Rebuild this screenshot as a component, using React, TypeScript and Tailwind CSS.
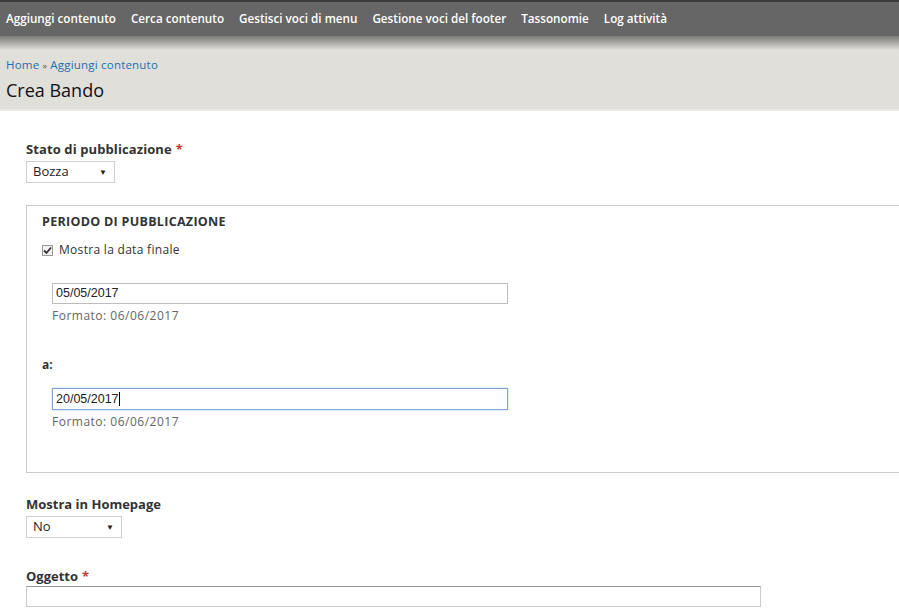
import React from "react";

const navItems = [
  "Aggiungi contenuto",
  "Cerca contenuto",
  "Gestisci voci di menu",
  "Gestione voci del footer",
  "Tassonomie",
  "Log attività",
];

function Select({ value, width }: { value: string; width: string }) {
  return (
    <div
      className={`${width} h-[22px] border border-[#cfcfcf] bg-white flex items-center justify-between pl-[6px] pr-[7px] text-[13px] text-[#222]`}
    >
      <span>{value}</span>
      <span className="text-[8px] text-[#222]">▼</span>
    </div>
  );
}

function Req() {
  return <span className="text-[#c0392b] ml-[4px]">*</span>;
}

export default function App() {
  return (
    <div
      className="w-[899px] h-[611px] overflow-hidden bg-white text-[#222]"
      style={{ fontFamily: '"Open Sans", "Noto Sans", sans-serif' }}
    >
      <nav className="h-[36px] bg-[#666666] border-t-[2px] border-[#3c3c3c] flex items-center gap-[15px] px-[6px] text-white text-[11.7px] font-semibold">
        {navItems.map((n) => (
          <span key={n}>{n}</span>
        ))}
      </nav>
      <header className="bg-[#e1dfd9] h-[75px] border-b-[2px] border-[#ebe9e4]">
        <div className="h-[14px] bg-gradient-to-b from-[#7b7b79] to-[#e1dfd9]" />
        <div className="px-[6px] pt-[7px] text-[11.5px] tracking-[0.2px] text-[#1a6fb0] leading-[16px]">
          Home <span className="text-[#555] text-[9px]">»</span> Aggiungi contenuto
        </div>
        <h1 className="px-[6px] mt-[3px] text-[18px] leading-[26px] text-[#111]">Crea Bando</h1>
      </header>

      <main className="pl-[26px]">
        <label className="block mt-[30px] text-[13px] font-bold leading-[16px] text-[#333] tracking-[0.1px]">
          Stato di pubblicazione
          <Req />
        </label>
        <div className="mt-[4px]">
          <Select value="Bozza" width="w-[89px]" />
        </div>

        <div className="mt-[22px] w-[890px] h-[268px] border border-[#cccccc] pl-[15px] pt-[8px]">
          <div className="text-[12.5px] font-bold leading-[16px] text-[#333] uppercase tracking-[0.3px]">
            Periodo di pubblicazione
          </div>
          <div className="mt-[12px] flex items-center gap-[6px] text-[12px] leading-[16px] text-[#333] tracking-[0.3px]">
            <span className="w-[11px] h-[11px] border border-[#999] bg-[#f2f2f2] flex items-center justify-center">
              <svg width="9" height="9" viewBox="0 0 9 9">
                <path d="M1 4.5 L3.5 7 L8 1.5" stroke="#333" strokeWidth="1.8" fill="none" />
              </svg>
            </span>
            Mostra la data finale
          </div>

          <div className="pl-[10px] mt-[25px]">
            <div
              className="w-[456px] h-[21px] border border-[#bdbdbd] flex items-center pl-[3px] text-[12.5px] text-[#222]"
              style={{ fontFamily: '"Liberation Sans", Arial, sans-serif' }}
            >
              05/05/2017
            </div>
            <div className="mt-[4px] text-[12px] leading-[16px] text-[#666] tracking-[0.5px]">
              Formato: 06/06/2017
            </div>
          </div>

          <div className="mt-[33px] text-[12px] font-bold leading-[16px] text-[#333]">a:</div>

          <div className="pl-[10px] mt-[15px]">
            <div
              className="w-[456px] h-[22px] border border-[#7fa7cf] shadow-[0_0_2px_#a9c6e4] flex items-center pl-[3px] text-[12.5px] text-[#222]"
              style={{ fontFamily: '"Liberation Sans", Arial, sans-serif' }}
            >
              20/05/2017<span className="w-[1px] h-[14px] bg-black" />
            </div>
            <div className="mt-[4px] text-[12px] leading-[16px] text-[#666] tracking-[0.5px]">
              Formato: 06/06/2017
            </div>
          </div>
        </div>

        <label className="block mt-[23px] text-[13px] font-bold leading-[16px] text-[#333]">
          Mostra in Homepage
        </label>
        <div className="mt-[4px]">
          <Select value="No" width="w-[96px]" />
        </div>

        <label className="block mt-[30px] text-[13px] font-bold leading-[16px] text-[#333]">
          Oggetto
          <Req />
        </label>
        <div className="mt-[2px] w-[735px] h-[21px] border border-[#cccccc] border-t-[#999]" />
      </main>
    </div>
  );
}
